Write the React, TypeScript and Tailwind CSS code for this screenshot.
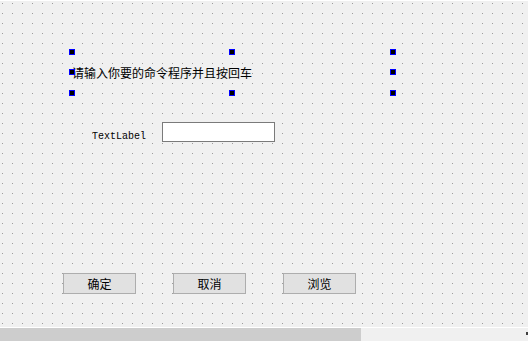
import React from "react";

const cjk = "font-['Noto_Sans_CJK_SC','Noto_Sans',sans-serif]";

function Handle({ className }: { className: string }) {
    return (
        <span
            className={`absolute w-[6px] h-[6px] bg-black border border-[#0000ff] ${className}`}
        />
    );
}

function PushButton({ text }: { text: string }) {
    return (
        <button
            className={`w-[73px] h-[21px] bg-[#e1e1e1] border border-[#adadad] text-[12px] leading-none text-black flex items-center justify-center ${cjk}`}
        >
            {text}
        </button>
    );
}

function App() {
    return (
        <div className="w-[528px] h-[341px] flex flex-col bg-[#f0f0f0] overflow-hidden">
            {/* form canvas with designer grid */}
            <div className="flex-1 flex flex-col bg-[radial-gradient(circle_at_2.5px_2.5px,#9c9c9c_0.6px,transparent_0.7px)] bg-[size:10px_10px] border-t border-white">
                <div className="relative mt-[51px] ml-[72px] w-[321px] h-[41px] flex items-center">
                    <span className={`text-[12px] leading-none text-black ${cjk}`}>
                        请输入你要的命令程序并且按回车
                    </span>
                    <Handle className="-left-[3px] -top-[3px]" />
                    <Handle className="left-[157px] -top-[3px]" />
                    <Handle className="-right-[3px] -top-[3px]" />
                    <Handle className="-left-[3px] top-[17px]" />
                    <Handle className="-right-[3px] top-[17px]" />
                    <Handle className="-left-[3px] -bottom-[3px]" />
                    <Handle className="left-[157px] -bottom-[3px]" />
                    <Handle className="-right-[3px] -bottom-[3px]" />
                </div>

                <div className="flex items-start mt-[29px]">
                    <span className="ml-[92px] mt-[10px] w-[70px] text-[10px] leading-none text-black font-['Liberation_Mono',monospace]">
                        TextLabel
                    </span>
                    <div className="w-[113px] h-[20px] bg-white border border-[#7a7a7a]" />
                </div>

                <div className="flex mt-[131px] ml-[63px] gap-[37px]">
                    <PushButton text="确定" />
                    <PushButton text="取消" />
                    <PushButton text="浏览" />
                </div>
            </div>

            {/* horizontal scroll bar */}
            <div className="h-[14px] flex border-t border-white">
                <div className="w-[361px] bg-[#cdcdcd]" />
                <div className="flex-1 flex justify-end items-start pt-[4px]">
                    <span className="w-[2px] h-[3px] bg-[#404040]" />
                </div>
            </div>
        </div>
    );
}

export default App;
